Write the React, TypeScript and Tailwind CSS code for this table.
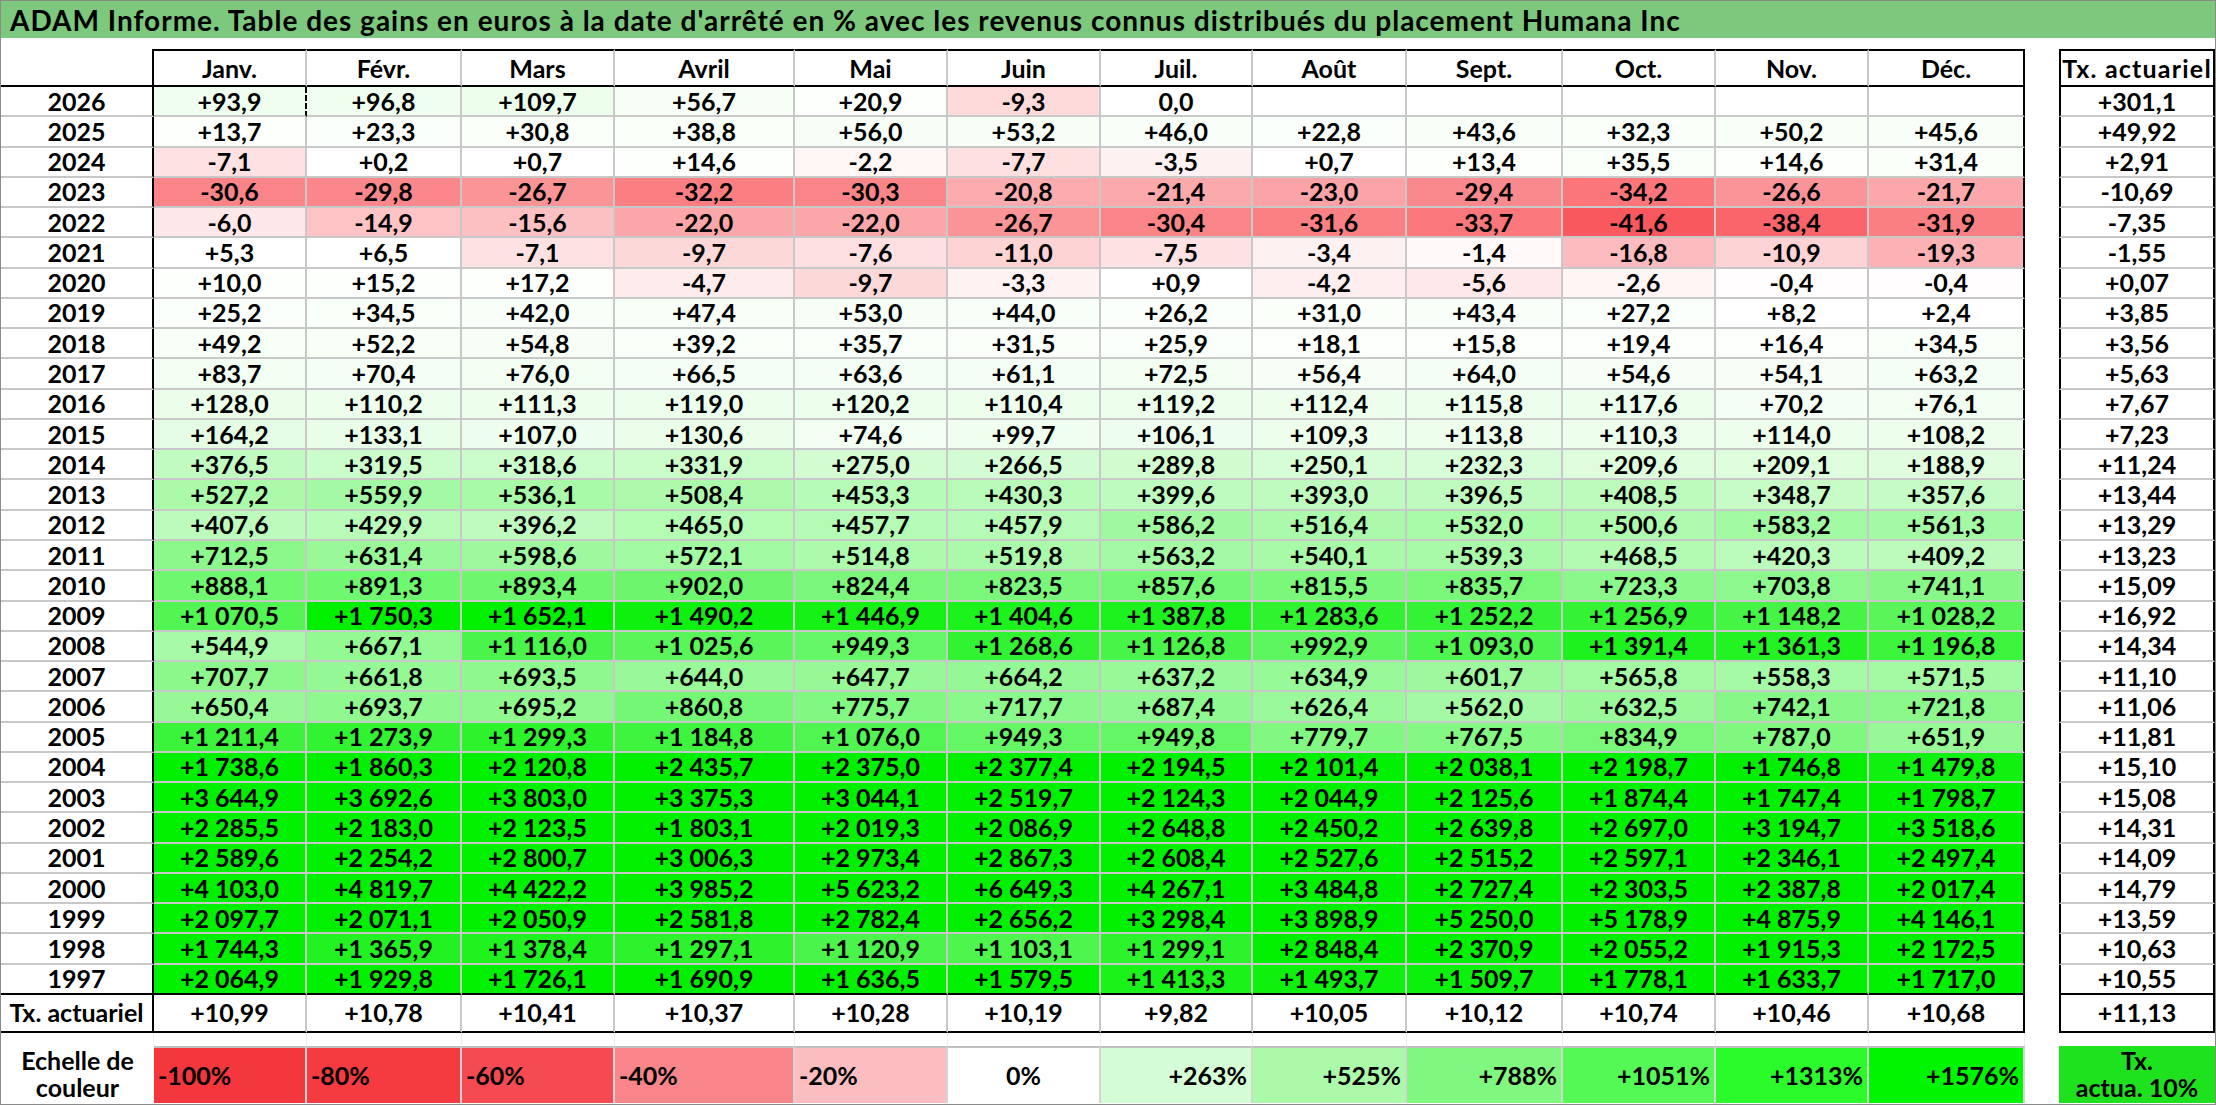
const MONTHS = ["Janv.", "Févr.", "Mars", "Avril", "Mai", "Juin", "Juil.", "Août", "Sept.", "Oct.", "Nov.", "Déc."];

// column widths as measured on the sheet (Avril is wider)
const COLS = [
  "w-[153px]",
  "w-[155px]",
  "w-[153px]",
  "w-[180px]",
  "w-[153px]",
  "w-[153px]",
  "w-[152px]",
  "w-[154px]",
  "w-[156px]",
  "w-[153px]",
  "w-[153px]",
  "w-[156px]",
];

type Row = { year: string; cells: string[]; tx: string };

const ROWS: Row[] = [
  { year: "2026", cells: ["+93,9", "+96,8", "+109,7", "+56,7", "+20,9", "-9,3", "0,0", "", "", "", "", ""], tx: "+301,1" },
  { year: "2025", cells: ["+13,7", "+23,3", "+30,8", "+38,8", "+56,0", "+53,2", "+46,0", "+22,8", "+43,6", "+32,3", "+50,2", "+45,6"], tx: "+49,92" },
  { year: "2024", cells: ["-7,1", "+0,2", "+0,7", "+14,6", "-2,2", "-7,7", "-3,5", "+0,7", "+13,4", "+35,5", "+14,6", "+31,4"], tx: "+2,91" },
  { year: "2023", cells: ["-30,6", "-29,8", "-26,7", "-32,2", "-30,3", "-20,8", "-21,4", "-23,0", "-29,4", "-34,2", "-26,6", "-21,7"], tx: "-10,69" },
  { year: "2022", cells: ["-6,0", "-14,9", "-15,6", "-22,0", "-22,0", "-26,7", "-30,4", "-31,6", "-33,7", "-41,6", "-38,4", "-31,9"], tx: "-7,35" },
  { year: "2021", cells: ["+5,3", "+6,5", "-7,1", "-9,7", "-7,6", "-11,0", "-7,5", "-3,4", "-1,4", "-16,8", "-10,9", "-19,3"], tx: "-1,55" },
  { year: "2020", cells: ["+10,0", "+15,2", "+17,2", "-4,7", "-9,7", "-3,3", "+0,9", "-4,2", "-5,6", "-2,6", "-0,4", "-0,4"], tx: "+0,07" },
  { year: "2019", cells: ["+25,2", "+34,5", "+42,0", "+47,4", "+53,0", "+44,0", "+26,2", "+31,0", "+43,4", "+27,2", "+8,2", "+2,4"], tx: "+3,85" },
  { year: "2018", cells: ["+49,2", "+52,2", "+54,8", "+39,2", "+35,7", "+31,5", "+25,9", "+18,1", "+15,8", "+19,4", "+16,4", "+34,5"], tx: "+3,56" },
  { year: "2017", cells: ["+83,7", "+70,4", "+76,0", "+66,5", "+63,6", "+61,1", "+72,5", "+56,4", "+64,0", "+54,6", "+54,1", "+63,2"], tx: "+5,63" },
  { year: "2016", cells: ["+128,0", "+110,2", "+111,3", "+119,0", "+120,2", "+110,4", "+119,2", "+112,4", "+115,8", "+117,6", "+70,2", "+76,1"], tx: "+7,67" },
  { year: "2015", cells: ["+164,2", "+133,1", "+107,0", "+130,6", "+74,6", "+99,7", "+106,1", "+109,3", "+113,8", "+110,3", "+114,0", "+108,2"], tx: "+7,23" },
  { year: "2014", cells: ["+376,5", "+319,5", "+318,6", "+331,9", "+275,0", "+266,5", "+289,8", "+250,1", "+232,3", "+209,6", "+209,1", "+188,9"], tx: "+11,24" },
  { year: "2013", cells: ["+527,2", "+559,9", "+536,1", "+508,4", "+453,3", "+430,3", "+399,6", "+393,0", "+396,5", "+408,5", "+348,7", "+357,6"], tx: "+13,44" },
  { year: "2012", cells: ["+407,6", "+429,9", "+396,2", "+465,0", "+457,7", "+457,9", "+586,2", "+516,4", "+532,0", "+500,6", "+583,2", "+561,3"], tx: "+13,29" },
  { year: "2011", cells: ["+712,5", "+631,4", "+598,6", "+572,1", "+514,8", "+519,8", "+563,2", "+540,1", "+539,3", "+468,5", "+420,3", "+409,2"], tx: "+13,23" },
  { year: "2010", cells: ["+888,1", "+891,3", "+893,4", "+902,0", "+824,4", "+823,5", "+857,6", "+815,5", "+835,7", "+723,3", "+703,8", "+741,1"], tx: "+15,09" },
  { year: "2009", cells: ["+1 070,5", "+1 750,3", "+1 652,1", "+1 490,2", "+1 446,9", "+1 404,6", "+1 387,8", "+1 283,6", "+1 252,2", "+1 256,9", "+1 148,2", "+1 028,2"], tx: "+16,92" },
  { year: "2008", cells: ["+544,9", "+667,1", "+1 116,0", "+1 025,6", "+949,3", "+1 268,6", "+1 126,8", "+992,9", "+1 093,0", "+1 391,4", "+1 361,3", "+1 196,8"], tx: "+14,34" },
  { year: "2007", cells: ["+707,7", "+661,8", "+693,5", "+644,0", "+647,7", "+664,2", "+637,2", "+634,9", "+601,7", "+565,8", "+558,3", "+571,5"], tx: "+11,10" },
  { year: "2006", cells: ["+650,4", "+693,7", "+695,2", "+860,8", "+775,7", "+717,7", "+687,4", "+626,4", "+562,0", "+632,5", "+742,1", "+721,8"], tx: "+11,06" },
  { year: "2005", cells: ["+1 211,4", "+1 273,9", "+1 299,3", "+1 184,8", "+1 076,0", "+949,3", "+949,8", "+779,7", "+767,5", "+834,9", "+787,0", "+651,9"], tx: "+11,81" },
  { year: "2004", cells: ["+1 738,6", "+1 860,3", "+2 120,8", "+2 435,7", "+2 375,0", "+2 377,4", "+2 194,5", "+2 101,4", "+2 038,1", "+2 198,7", "+1 746,8", "+1 479,8"], tx: "+15,10" },
  { year: "2003", cells: ["+3 644,9", "+3 692,6", "+3 803,0", "+3 375,3", "+3 044,1", "+2 519,7", "+2 124,3", "+2 044,9", "+2 125,6", "+1 874,4", "+1 747,4", "+1 798,7"], tx: "+15,08" },
  { year: "2002", cells: ["+2 285,5", "+2 183,0", "+2 123,5", "+1 803,1", "+2 019,3", "+2 086,9", "+2 648,8", "+2 450,2", "+2 639,8", "+2 697,0", "+3 194,7", "+3 518,6"], tx: "+14,31" },
  { year: "2001", cells: ["+2 589,6", "+2 254,2", "+2 800,7", "+3 006,3", "+2 973,4", "+2 867,3", "+2 608,4", "+2 527,6", "+2 515,2", "+2 597,1", "+2 346,1", "+2 497,4"], tx: "+14,09" },
  { year: "2000", cells: ["+4 103,0", "+4 819,7", "+4 422,2", "+3 985,2", "+5 623,2", "+6 649,3", "+4 267,1", "+3 484,8", "+2 727,4", "+2 303,5", "+2 387,8", "+2 017,4"], tx: "+14,79" },
  { year: "1999", cells: ["+2 097,7", "+2 071,1", "+2 050,9", "+2 581,8", "+2 782,4", "+2 656,2", "+3 298,4", "+3 898,9", "+5 250,0", "+5 178,9", "+4 875,9", "+4 146,1"], tx: "+13,59" },
  { year: "1998", cells: ["+1 744,3", "+1 365,9", "+1 378,4", "+1 297,1", "+1 120,9", "+1 103,1", "+1 299,1", "+2 848,4", "+2 370,9", "+2 055,2", "+1 915,3", "+2 172,5"], tx: "+10,63" },
  { year: "1997", cells: ["+2 064,9", "+1 929,8", "+1 726,1", "+1 690,9", "+1 636,5", "+1 579,5", "+1 413,3", "+1 493,7", "+1 509,7", "+1 778,1", "+1 633,7", "+1 717,0"], tx: "+10,55" },
];

const TOTALS = ["+10,99", "+10,78", "+10,41", "+10,37", "+10,28", "+10,19", "+9,82", "+10,05", "+10,12", "+10,74", "+10,46", "+10,68"];

const SCALE = [
  { label: "-100%", bg: "bg-[#f4363d]", align: "justify-start pl-[4px]" },
  { label: "-80%", bg: "bg-[#f53a40]", align: "justify-start pl-[4px]" },
  { label: "-60%", bg: "bg-[#f54a51]", align: "justify-start pl-[4px]" },
  { label: "-40%", bg: "bg-[#f8858a]", align: "justify-start pl-[4px]" },
  { label: "-20%", bg: "bg-[#fbbdc0]", align: "justify-start pl-[4px]" },
  { label: "0%", bg: "bg-white", align: "justify-center" },
  { label: "+263%", bg: "bg-[#d5fdd5]", align: "justify-end pr-[4px]" },
  { label: "+525%", bg: "bg-[#aafaaa]", align: "justify-end pr-[4px]" },
  { label: "+788%", bg: "bg-[#80f880]", align: "justify-end pr-[4px]" },
  { label: "+1051%", bg: "bg-[#55f955]", align: "justify-end pr-[4px]" },
  { label: "+1313%", bg: "bg-[#2bfb2b]", align: "justify-end pr-[4px]" },
  { label: "+1576%", bg: "bg-[#00f500]", align: "justify-end pr-[4px]" },
];

function parse(v: string) {
  return parseFloat(v.replace(/[+\s]/g, "").replace(",", "."));
}

// white -> green up to +1576, white -> red down to -50
function cellColor(v: string): string {
  if (!v) return "#ffffff";
  const n = parse(v);
  if (n > 0) {
    const t = Math.min(1, n / 1576);
    const rb = Math.round(255 * (1 - t));
    const g = Math.round(255 - 15 * t);
    return `rgb(${rb},${g},${rb})`;
  }
  if (n < 0) {
    const t = Math.min(1, -n / 50);
    return `rgb(${Math.round(255 - 8 * t)},${Math.round(255 - 201 * t)},${Math.round(255 - 194 * t)})`;
  }
  return "#ffffff";
}

function DataRow({ row, last }: { row: Row; last: boolean }) {
  const bottom = last ? "border-b-black" : "border-b-[#c8c8c8]";
  return (
    <div className="flex h-[30.27px]">
      <div className={`flex w-[153px] shrink-0 items-center justify-center border-r-2 border-b-2 border-r-black ${bottom}`}>
        {row.year}
      </div>
      {row.cells.map((c, i) => (
        <div
          key={i}
          className={`flex shrink-0 items-center justify-center border-r-2 border-b-2 ${COLS[i]} ${bottom} ${
            i === 11 ? "border-r-black" : row.year === "2026" && i === 0 ? "border-r-black [border-right-style:dashed]" : "border-r-[#c8c8c8]"
          }`}
          style={{ backgroundColor: cellColor(c) }}
        >
          {c}
        </div>
      ))}
      <div className="w-[34px] shrink-0" />
      <div className={`flex flex-1 items-center justify-center border-x-2 border-b-2 border-x-black ${bottom}`}>{row.tx}</div>
    </div>
  );
}

export default function App() {
  return (
    <div className="h-[1105px] w-[2216px] overflow-hidden border border-[#8a8a8a] bg-white font-['Lato',sans-serif] text-[25px] font-bold leading-none text-black">
      <div className="flex h-[37px] items-center bg-[#7cc87c] pl-[9px] text-[28px] tracking-[1px]">
        ADAM Informe. Table des gains en euros à la date d'arrêté en % avec les revenus connus distribués du placement Humana Inc
      </div>
      <div className="h-[11px]" />

      {/* header */}
      <div className="flex h-[38px]">
        <div className="w-[153px] shrink-0 border-r-2 border-b-2 border-r-black border-b-black" />
        {MONTHS.map((m, i) => (
          <div
            key={m}
            className={`flex shrink-0 items-center justify-center border-y-2 border-r-2 border-y-black ${COLS[i]} ${
              i === 11 ? "border-r-black" : "border-r-[#c8c8c8]"
            }`}
          >
            {m}
          </div>
        ))}
        <div className="w-[34px] shrink-0" />
        <div className="flex flex-1 items-center justify-center border-2 border-black tracking-[1.2px]">Tx. actuariel</div>
      </div>

      {ROWS.map((r, i) => (
        <DataRow key={r.year} row={r} last={i === ROWS.length - 1} />
      ))}

      {/* totals */}
      <div className="flex h-[38px]">
        <div className="flex w-[153px] shrink-0 items-center justify-center border-r-2 border-b-2 border-black">Tx. actuariel</div>
        {TOTALS.map((t, i) => (
          <div
            key={i}
            className={`flex shrink-0 items-center justify-center border-r-2 border-b-2 border-b-black ${COLS[i]} ${
              i === 11 ? "border-r-black" : "border-r-[#c8c8c8]"
            }`}
          >
            {t}
          </div>
        ))}
        <div className="w-[34px] shrink-0" />
        <div className="flex flex-1 items-center justify-center border-x-2 border-b-2 border-black">+11,13</div>
      </div>

      {/* faint sheet grid between table and colour scale */}
      <div className="flex h-[13px]">
        <div className="w-[153px] shrink-0 border-r border-r-[#ececec]" />
        {COLS.map((w, i) => (
          <div key={i} className={`shrink-0 border-r border-r-[#ececec] ${w}`} />
        ))}
      </div>

      {/* colour scale */}
      <div className="flex h-[57px]">
        <div className="flex w-[153px] shrink-0 flex-col items-center justify-center leading-[27px]">
          <span>Echelle de</span>
          <span>couleur</span>
        </div>
        {SCALE.map((s, i) => (
          <div
            key={s.label}
            className={`flex shrink-0 items-center border-t-2 border-r-2 border-t-[#c0c0c0] border-r-[#d4d4d4] ${COLS[i]} ${s.bg} ${s.align}`}
          >
            {s.label}
          </div>
        ))}
        <div className="w-[34px] shrink-0" />
        <div className="flex flex-1 flex-col items-center justify-center bg-[#1ee21e] leading-[27px]">
          <span>Tx.</span>
          <span>actua. 10%</span>
        </div>
      </div>
    </div>
  );
}
